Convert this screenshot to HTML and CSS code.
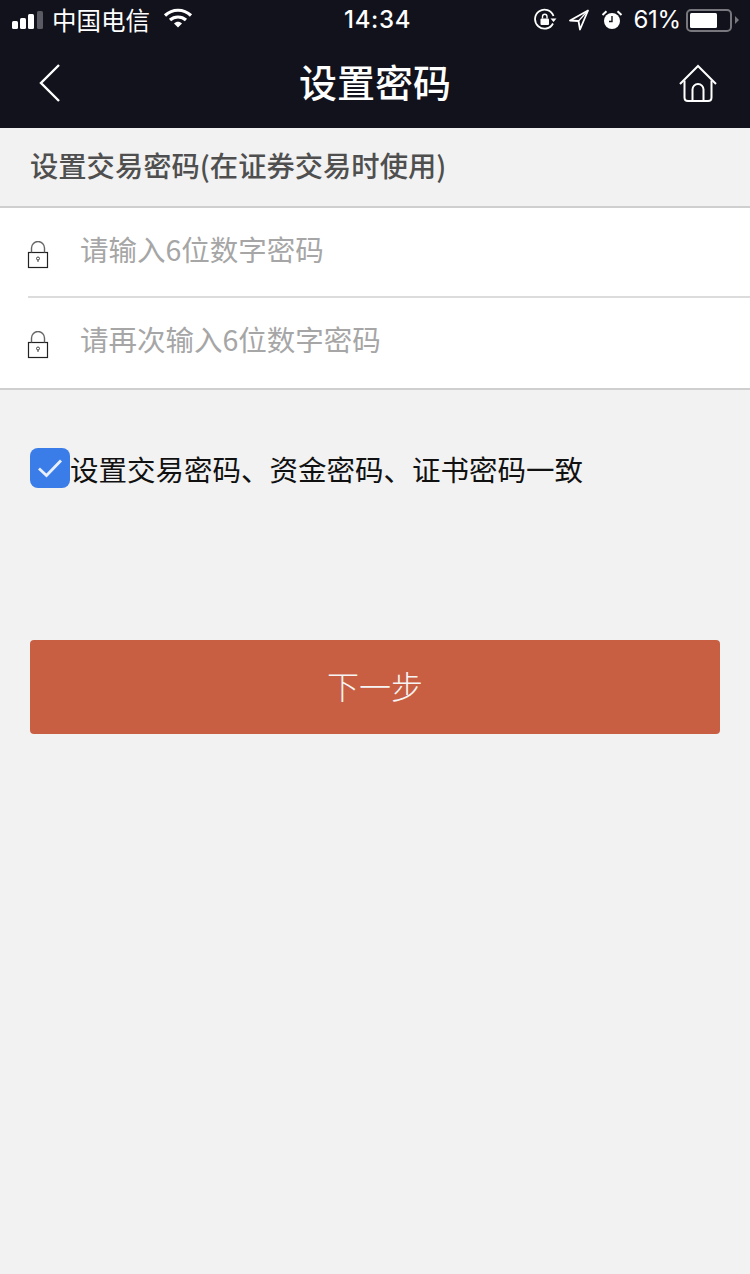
FILE: index.html
```html
<!DOCTYPE html>
<html lang="zh-CN">
<head>
<meta charset="utf-8">
<title>设置密码</title>
<link rel="stylesheet" href="styles.css">
</head>
<body>
<header class="top">
  <div class="status">
    <div class="status-left">
      <div class="signal"><i class="s1"></i><i class="s2"></i><i class="s3"></i><i class="s4"></i></div>
      <span class="carrier">中国电信</span>
      <svg class="wifi" width="30" height="20" viewBox="0 0 30 20"><path d="M2 7.500C9.500 0.500 20.500 0.500 28 7.500" fill="none" stroke="#fff" stroke-width="3.200"/><path d="M7 12C11.500 8 18.500 8 23 12" fill="none" stroke="#fff" stroke-width="3.200"/><path d="M11 15.500C13.500 13 16.500 13 19 15.500L15 19.500Z" fill="#fff"/></svg>
    </div>
    <div class="clock">14:34</div>
    <div class="status-right">
      <svg class="ic-rot" width="24" height="24" viewBox="0 0 24 24"><path d="M20 15.500A9.500 9.500 0 1 1 20.500 8" fill="none" stroke="#fff" stroke-width="1.800"/><path d="M17.500 10.500H23.500L20.500 14Z" fill="#fff"/><rect x="7.500" y="10.500" width="8.500" height="6.500" rx="1" fill="#fff"/><path d="M9.500 10.500V8.500A2.200 2.200 0 0 1 14 8.500V10.500" fill="none" stroke="#fff" stroke-width="1.400"/></svg>
      <svg class="ic-loc" width="22" height="22" viewBox="0 0 22 22"><path d="M20 1.500L2 11.500L10.500 12L12 20.500Z" fill="none" stroke="#fff" stroke-width="1.800" stroke-linejoin="round"/><path d="M20 1.500L10.500 12" stroke="#fff" stroke-width="1.200"/></svg>
      <svg class="ic-alarm" width="22" height="22" viewBox="0 0 22 22"><circle cx="11" cy="12" r="8" fill="#fff"/><path d="M11 7V12.500H8" fill="none" stroke="#12121c" stroke-width="1.400"/><path d="M1.500 6L5.500 2.200M20.500 6L16.500 2.200" stroke="#fff" stroke-width="2"/></svg>
      <span class="batt-pct">61%</span>
      <div class="battery"><div class="batt-body"><div class="batt-fill"></div></div><div class="batt-tip"></div></div>
    </div>
  </div>
  <nav class="nav">
    <svg class="back" width="24" height="40" viewBox="0 0 24 40"><path d="M21 2L3 20L21 38" fill="none" stroke="#fff" stroke-width="2.400"/></svg>
    <h1 class="title">设置密码</h1>
    <svg class="home" width="40" height="40" viewBox="0 0 40 40"><path d="M2 20L20 2L38 20" fill="none" stroke="#fff" stroke-width="2"/><path d="M6.500 16.500V33.500Q6.500 37 10 37H30Q33.500 37 33.500 33.500V16.500" fill="none" stroke="#fff" stroke-width="2"/><path d="M14.500 37V25.500A5.500 5.500 0 0 1 25.500 25.500V37" fill="none" stroke="#fff" stroke-width="2"/></svg>
  </nav>
</header>

<main>
  <h2 class="section">设置交易密码(在证券交易时使用)</h2>
  <section class="fields">
    <div class="field">
      <svg class="lock" width="22" height="28" viewBox="0 0 22 28"><rect x="1.500" y="11.500" width="19" height="15" fill="none" stroke="#222" stroke-width="1.200"/><path d="M4.500 11.500V7A6.500 6.500 0 0 1 17.500 7V11.500" fill="none" stroke="#666" stroke-width="1.400"/><circle cx="11" cy="17.500" r="1.500" fill="none" stroke="#444"/><path d="M11 19V21" stroke="#444"/></svg>
      <span class="ph">请输入6位数字密码</span>
    </div>
    <div class="field second">
      <svg class="lock" width="22" height="28" viewBox="0 0 22 28"><rect x="1.500" y="11.500" width="19" height="15" fill="none" stroke="#222" stroke-width="1.200"/><path d="M4.500 11.500V7A6.500 6.500 0 0 1 17.500 7V11.500" fill="none" stroke="#666" stroke-width="1.400"/><circle cx="11" cy="17.500" r="1.500" fill="none" stroke="#444"/><path d="M11 19V21" stroke="#444"/></svg>
      <span class="ph">请再次输入6位数字密码</span>
    </div>
  </section>
  <div class="agree">
    <span class="check"><svg width="26" height="22" viewBox="0 0 26 22"><path d="M2 11.500L9.500 18.500L24 3.500" fill="none" stroke="#e8f0ff" stroke-width="2.800"/></svg></span>
    <span class="agree-text">设置交易密码、资金密码、证书密码一致</span>
  </div>
  <button class="next" type="button">下一步</button>
</main>
</body>
</html>
```
FILE: styles.css
```css
* { box-sizing: border-box; }
html, body { margin: 0; padding: 0; }
body {
  width: 750px;
  height: 1274px;
  overflow: hidden;
  background: #f2f2f2;
  font-family: "Noto Sans CJK SC", "Noto Sans", sans-serif;
}
.top { background: #12121c; color: #fff; height: 128px; }
.status {
  height: 44px;
  position: relative;
  display: flex;
  justify-content: space-between;
  align-items: center;
  padding: 0 11px 4px 12px;
}
.status-left, .status-right { display: flex; align-items: center; }
.signal { display: flex; align-items: flex-end; gap: 2px; height: 18px; }
.signal i { display: block; width: 6px; background: #fff; border-radius: 1.500px; }
.signal .s1 { height: 8px; }
.signal .s2 { height: 11px; }
.signal .s3 { height: 15px; }
.signal .s4 { height: 18px; background: #5a5a62; margin-left: 1px; }
.carrier { margin-left: 9px; font-size: 24.500px; line-height: 30px; font-weight: 400; }
.wifi { margin-left: 13px; margin-bottom: 4px; }
.clock {
  position: absolute;
  left: 344px;
  top: 5px;
  font: 500 24px/30px "Inter", "Liberation Sans", sans-serif;
  letter-spacing: 0.700px;
}
.ic-rot { margin-right: 11px; }
.ic-loc { margin-right: 11px; }
.ic-alarm { margin-right: 10px; }
.batt-pct { font: 400 24px/30px "Inter", "Liberation Sans", sans-serif; margin-right: 5px; letter-spacing: -0.200px; }
.battery { display: flex; align-items: center; }
.batt-body {
  width: 46px;
  height: 23px;
  border: 2px solid #77777d;
  border-radius: 5px;
  padding: 2px;
}
.batt-fill { width: 27px; height: 100%; background: #fff; border-radius: 1.500px; }
.batt-tip {
  width: 0;
  height: 0;
  margin-left: 3px;
  border-left: 4px solid #77777d;
  border-top: 4px solid transparent;
  border-bottom: 4px solid transparent;
}
.nav {
  height: 84px;
  position: relative;
  display: flex;
  align-items: center;
  justify-content: space-between;
  padding: 0 32px 6px 38px;
}
.back { display: block; }
.home { display: block; margin-top: 2px; }
.title {
  position: absolute;
  left: 0;
  right: 0;
  top: 12px;
  margin: 0;
  text-align: center;
  font-size: 38px;
  line-height: 50px;
  font-weight: 500;
}
.section {
  margin: 0;
  height: 78px;
  padding: 18px 0 0 30px;
  font-size: 28.300px;
  line-height: 38px;
  font-weight: 500;
  color: #4f4f4f;
}
.fields {
  background: #fff;
  border-top: 2px solid #cfcfcf;
  border-bottom: 2px solid #cfcfcf;
  height: 184px;
}
.field {
  height: 88px;
  position: relative;
  display: flex;
  align-items: center;
  padding-left: 27px;
}
.second { height: 92px; border-top: 2px solid #dcdcdc; margin-left: 28px; padding-left: 0; }
.lock { position: absolute; left: 27px; top: 33px; }
.second .lock { left: -1px; top: 33px; }
.ph {
  position: absolute;
  left: 80px;
  top: 21px;
  font-size: 28.500px;
  line-height: 40px;
  color: #a6a6a6;
  font-weight: 400;
}
.second .ph { left: 52px; top: 21px; }
.agree {
  display: flex;
  align-items: center;
  margin: 57px 0 0 30px;
  height: 42px;
}
.check {
  width: 40px;
  height: 40px;
  border-radius: 8px;
  background: #3a7de8;
  display: flex;
  align-items: center;
  justify-content: center;
}
.agree-text { font-size: 28.500px; line-height: 40px; color: #111; font-weight: 400; margin-top: 2px; }
.next {
  display: block;
  width: 690px;
  height: 94px;
  margin: 151px 0 0 30px;
  border: 0;
  border-radius: 4px;
  background: #c95f42;
  color: #f5f5f5;
  font-family: inherit;
  font-size: 32px;
  font-weight: 300;
  padding: 0 0 4px;
}
```
